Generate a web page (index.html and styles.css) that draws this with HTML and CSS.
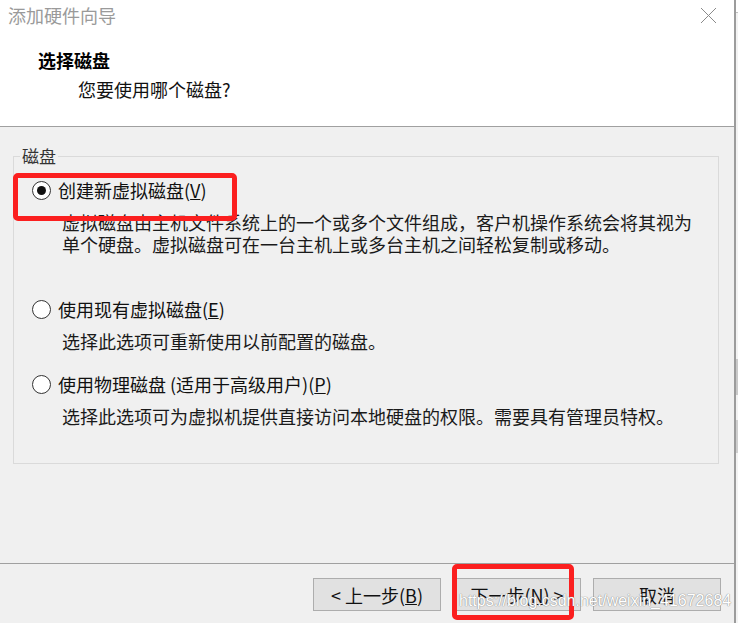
FILE: index.html
```html
<!DOCTYPE html>
<html lang="zh-CN">
<head>
    <meta charset="UTF-8">
    <title>添加硬件向导</title>
    <link rel="stylesheet" href="styles.css">
</head>
<body>

<div class="dialog">
    <div class="top">
        <div class="titlebar">
            <span class="title">添加硬件向导</span>
            <svg class="close" width="17" height="17" viewBox="0 0 17 17">
                <path d="M1 1 L16 16 M16 1 L1 16" stroke="#8a8a8a" stroke-width="1" fill="none"/>
            </svg>
        </div>
        <div class="heading">选择磁盘</div>
        <div class="subheading">您要使用哪个磁盘?</div>
    </div>

    <div class="content">
        <fieldset class="group">
            <legend>磁盘</legend>
            <div class="options">
                <div class="option">
                    <div class="row">
                        <span class="radio checked"></span>
                        <span>创建新虚拟磁盘(<u>V</u>)</span>
                    </div>
                    <p class="desc tall">虚拟磁盘由主机文件系统上的一个或多个文件组成，客户机操作系统会将其视为<br>单个硬盘。虚拟磁盘可在一台主机上或多台主机之间轻松复制或移动。</p>
                </div>
                <div class="option">
                    <div class="row">
                        <span class="radio"></span>
                        <span>使用现有虚拟磁盘(<u>E</u>)</span>
                    </div>
                    <p class="desc">选择此选项可重新使用以前配置的磁盘。</p>
                </div>
                <div class="option">
                    <div class="row">
                        <span class="radio"></span>
                        <span>使用物理磁盘 (适用于高级用户)(<u>P</u>)</span>
                    </div>
                    <p class="desc">选择此选项可为虚拟机提供直接访问本地硬盘的权限。需要具有管理员特权。</p>
                </div>
            </div>
        </fieldset>
        <div class="mark mark-option"></div>
    </div>

    <div class="footer">
        <button>&lt; 上一步(<u>B</u>)</button>
        <button>下一步(<u>N</u>) &gt;</button>
        <button>取消</button>
        <div class="mark mark-next"></div>
        <div class="watermark">https://blog.csdn.net/weixin_41672684</div>
    </div>
</div>

<div class="side">
    <div class="s-white"></div>
    <div class="s-line"></div>
    <div class="s-light a"></div>
    <div class="s-gray a"></div>
    <div class="s-light b"></div>
    <div class="s-gray b"></div>
    <div class="s-light c"></div>
</div>

</body>
</html>
```

FILE: styles.css
```css
body {
    margin: 0;
    display: flex;
    height: 623px;
    overflow: hidden;
    background-color: #f3f3f3;
    font-family: "Noto Sans CJK SC", "Liberation Sans", sans-serif;
    color: #111;
}
.dialog {
    width: 734px;
    flex-shrink: 0;
    border-right: 2px solid #9c9c9c;
    background-color: #f0f0f0;
    position: relative;
}

/* white header */
.top {
    height: 126px;
    background-color: #fff;
    border-bottom: 1px solid #a0a0a0;
}
.titlebar {
    height: 30px;
    display: flex;
    align-items: center;
    justify-content: space-between;
    padding: 0 17px 0 8px;
}
.title {
    font-size: 18px;
    color: #9a9a9a;
}
.close {
    display: block;
}
.heading {
    margin: 18px 0 0 38px;
    font-size: 18px;
    font-weight: bold;
    line-height: 24px;
    color: #000;
}
.subheading {
    margin: 5px 0 0 78px;
    font-size: 18px;
    line-height: 24px;
}

/* group box */
.content {
    height: 436px;
    padding: 18px 0 0 13px;
    box-sizing: border-box;
    position: relative;
}
.group {
    width: 706px;
    margin: 0;
    padding: 0 0 36px 6px;
    box-sizing: border-box;
    border: 1px solid #dadada;
}
.group legend {
    padding: 0 2px;
    font-size: 17px;
    line-height: 22px;
    color: #333;
}
.options {
    padding: 12px 0 0 12px;
}
.option {
    margin-bottom: 21px;
}
.option:last-child {
    margin-bottom: 0;
}
.row {
    display: flex;
    align-items: center;
    gap: 7px;
    font-size: 18px;
    line-height: 22px;
}
.radio {
    width: 17px;
    height: 17px;
    border: 1px solid #333;
    border-radius: 50%;
    background-color: #fff;
    display: flex;
    align-items: center;
    justify-content: center;
}
.radio.checked::after {
    content: "";
    width: 9px;
    height: 9px;
    border-radius: 50%;
    background-color: #111;
}
.desc {
    margin: 10px 0 0 30px;
    font-size: 18px;
    line-height: 22px;
    color: #1a1a1a;
}
.desc.tall {
    min-height: 66px;
}

/* buttons */
.footer {
    height: 60px;
    border-top: 1px solid #a0a0a0;
    display: flex;
    justify-content: flex-end;
    gap: 12px;
    padding: 14px 13px 0 0;
    box-sizing: border-box;
    position: relative;
}
button {
    width: 128px;
    height: 33px;
    background-color: #e1e1e1;
    border: 1px solid #adadad;
    font-family: "Noto Sans CJK SC", "Liberation Sans", sans-serif;
    font-size: 18px;
    color: #111;
    padding: 0;
}

/* red highlight boxes drawn on the screenshot */
.mark {
    position: absolute;
    border: 5px solid #fb1f1f;
    border-radius: 5px;
}
.mark-option {
    left: 13px;
    top: 46px;
    width: 214px;
    height: 38px;
}
.mark-next {
    left: 452px;
    top: 0;
    width: 112px;
    height: 46px;
}
.watermark {
    position: absolute;
    left: 459px;
    top: 28px;
    font-family: "Liberation Sans", sans-serif;
    font-size: 16px;
    color: #fff;
    text-shadow: 0 0 1px #8a8a8a, 0 0 1px #8a8a8a;
}

/* strip of the window behind */
.side {
    flex: 1;
    display: flex;
    flex-direction: column;
}
.s-white { height: 12px; background-color: #fff; }
.s-line { height: 1px; background-color: #c0c0c0; }
.s-light.a { height: 346px; }
.s-gray.a { height: 36px; background-color: #c9c9c9; }
.s-light.b { height: 25px; }
.s-gray.b { height: 33px; background-color: #cfcfcf; }
.s-light.c { flex: 1; }
```
